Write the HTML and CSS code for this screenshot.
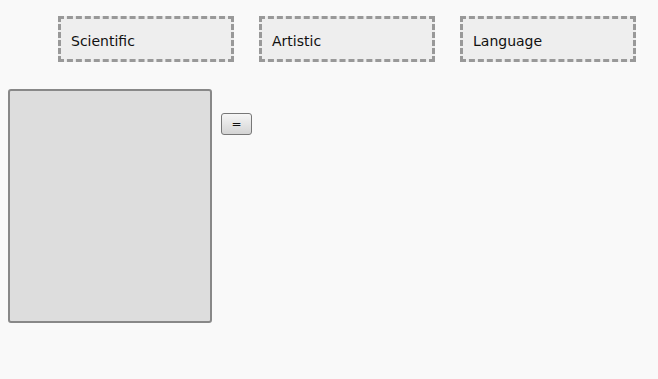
FILE: index.html
```html
<!DOCTYPE html>
<html lang="en">
<head>
  <meta charset="UTF-8" />
  <title>Categories</title>
  <link rel="stylesheet" href="styles.css">
</head>
<body>
  <div class="categories">
    <div class="category">Scientific</div>
    <div class="category">Artistic</div>
    <div class="category">Language</div>
  </div>

  <div class="workspace">
    <div class="drop-area"></div>
    <button class="equals-btn">=</button>
  </div>
</body>
</html>
```

FILE: styles.css
```css
body {
  font-family: "DejaVu Sans", Verdana, sans-serif;
  background-color: #f9f9f9;
  margin: 8px;
  color: #111;
}
.categories {
  display: flex;
  gap: 25px;
  margin-top: 8px;
  padding-left: 50px;
}
.category {
  width: 176px;
  height: 46px;
  box-sizing: border-box;
  border: 3px dashed #999;
  background-color: #eeeeee;
  padding: 3px 10px 0;
  display: flex;
  align-items: center;
  font-size: 14px;
}
.workspace {
  display: flex;
  align-items: flex-start;
  margin-top: 27px;
}
.drop-area {
  width: 204px;
  height: 234px;
  box-sizing: border-box;
  background-color: #dddddd;
  border: 2px solid #888;
  border-radius: 3px;
}
.equals-btn {
  margin-left: 9px;
  margin-top: 24px;
  width: 31px;
  height: 22px;
  padding: 0;
  font-family: "DejaVu Sans", sans-serif;
  font-size: 12px;
  color: #111;
  border: 1px solid #777;
  border-radius: 3px;
  background: linear-gradient(#f6f6f6, #d4d4d4);
}
```
